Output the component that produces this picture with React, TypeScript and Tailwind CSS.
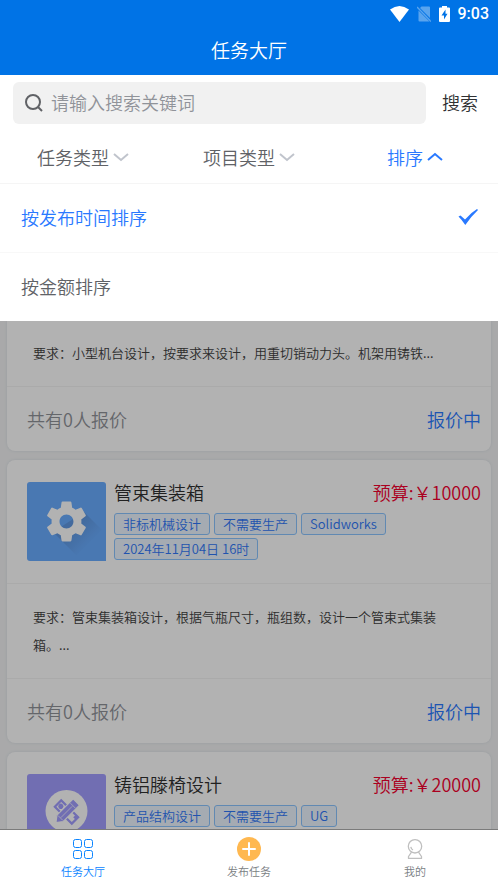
import { useState } from "react";

type Job = {
  title?: string;
  price?: string;
  tags?: string[];
  icon?: "gear" | "tools";
  text?: string;
};

const jobs: Job[] = [
  { text: "要求：小型机台设计，按要求来设计，用重切销动力头。机架用铸铁..." },
  {
    title: "管束集装箱",
    price: "10000",
    icon: "gear",
    tags: ["非标机械设计", "不需要生产", "Solidworks", "2024年11月04日 16时"],
    text: "要求：管束集装箱设计，根据气瓶尺寸，瓶组数，设计一个管束式集装箱。...",
  },
  {
    title: "铸铝滕椅设计",
    price: "20000",
    icon: "tools",
    tags: ["产品结构设计", "不需要生产", "UG"],
  },
];

function StatusBar() {
  return (
    <div className="flex h-7 items-center justify-end pr-[9px] text-white">
      <svg className="mr-2" width="19" height="16" viewBox="0 0 19 16" fill="currentColor">
        <path d="M0 3.6Q9.500-3.400 19 3.600L9.500 16Z" />
      </svg>
      <svg className="mr-2" width="14" height="16" viewBox="0 0 14 16" fill="currentColor" opacity="0.35">
        <path d="M4.500 0.500H12Q13 0.500 13 1.500V12L3 2Z" />
        <path d="M1.500 4.500L12.500 15.500H2.500Q1.500 15.500 1.500 14.500Z" />
        <path d="M0 1L14 15.500" stroke="currentColor" strokeWidth="1.400" />
      </svg>
      <svg className="mr-2" width="11" height="16" viewBox="0 0 11 16">
        <path d="M3 0H8V1.500H10Q11 1.500 11 2.500V15Q11 16 10 16H1Q0 16 0 15V2.500Q0 1.500 1 1.500H3Z" fill="currentColor" />
        <path d="M6.500 3.500L2.500 9.500H5V13.500L8.500 7.800H6.500Z" fill="#0073e6" />
      </svg>
      <span className="font-['Roboto',sans-serif] text-base font-medium leading-5">9:03</span>
    </div>
  );
}

function Chevron({ up = false }: { up?: boolean }) {
  return (
    <svg width="16" height="10" viewBox="0 0 16 10" fill="none" stroke="currentColor" strokeWidth="2">
      <path d={up ? "M1 8L8 2L15 8" : "M1 2L8 8L15 2"} />
    </svg>
  );
}

function GearTile() {
  return (
    <svg className="size-[79px] shrink-0" viewBox="0 0 79 79">
      <defs>
        <linearGradient id="gearShade" gradientUnits="userSpaceOnUse" x1="40" y1="40" x2="62" y2="62">
          <stop offset="0.3" stopColor="#6099e2" />
          <stop offset="1" stopColor="#69acff" />
        </linearGradient>
      </defs>
      <rect width="79" height="79" rx="3" fill="#69acff" />
      <path d="M57 30L79 52V79H55L26 50Z" fill="url(#gearShade)" />
      <g transform="translate(15.600 15.600) scale(1.990)">
        <path
          fill="#fff"
          d="M19.430 12.980c.040-.320.070-.640.070-.980s-.030-.660-.070-.980l2.110-1.650c.190-.150.240-.420.120-.640l-2-3.460c-.120-.220-.390-.300-.610-.220l-2.490 1c-.520-.400-1.080-.730-1.690-.980l-.380-2.650C14.460 2.180 14.250 2 14 2h-4c-.250 0-.460.180-.490.420l-.380 2.650c-.610.250-1.170.590-1.690.980l-2.490-1c-.230-.090-.490 0-.610.220l-2 3.460c-.130.220-.070.490.120.640l2.110 1.650c-.040.320-.070.650-.070.980s.030.660.070.980l-2.110 1.650c-.190.150-.240.420-.120.640l2 3.460c.120.220.390.300.610.220l2.490-1c.520.400 1.080.730 1.690.980l.380 2.650c.030.240.240.420.490.420h4c.250 0 .460-.180.490-.420l.380-2.650c.610-.250 1.170-.590 1.690-.980l2.490 1c.230.090.490 0 .610-.220l2-3.460c.120-.220.070-.490-.120-.640l-2.110-1.650zM12 15.500c-1.930 0-3.500-1.570-3.500-3.500s1.570-3.500 3.500-3.500 3.500 1.570 3.500 3.500-1.570 3.500-3.500 3.500z"
        />
      </g>
    </svg>
  );
}

function ToolsTile() {
  return (
    <svg className="size-[79px] shrink-0" viewBox="0 0 79 79">
      <rect width="79" height="79" rx="3" fill="#a29eff" />
      <circle cx="39.500" cy="37" r="21" fill="#fff" />
      <g transform="translate(39.500 38)" stroke="#a29eff" strokeWidth="2.200" fill="none">
        <g transform="rotate(45)">
          <rect x="-12" y="-4.500" width="24" height="9" />
          <circle cx="-8" cy="0" r="1.500" fill="#a29eff" />
          <path d="M10-4V-1" strokeWidth="3" />
        </g>
        <g transform="rotate(-45)">
          <path d="M-15 0L-9-4.500H14V4.500H-9Z" fill="#a29eff" stroke="#fff" strokeWidth="1.200" />
          <path d="M-8.500-3.500V3.500M9-3.500V3.500M-8 0H8" stroke="#fff" strokeWidth="0.700" />
        </g>
      </g>
    </svg>
  );
}

function JobCard({ job }: { job: Job }) {
  return (
    <article
      className={"bg-white shadow-[0_0_3px_#d8dde3] " + (job.title ? "rounded-lg" : "rounded-b-lg")}
    >
      {job.title && (
        <div className="flex gap-2 border-b border-[#f4f4f4] pt-[22px] pr-[10px] pb-[22px] pl-5">
          {job.icon === "gear" ? <GearTile /> : <ToolsTile />}
          <div className="min-w-0 flex-1">
            <div className="flex justify-between text-lg leading-5">
              <h2 className="text-[#303030]">{job.title}</h2>
              <span className="text-[#f5002f]">预算:￥{job.price}</span>
            </div>
            <div className="mt-[11px] flex flex-wrap gap-x-1 gap-y-[3px]">
              {job.tags?.map((tag) => (
                <span
                  key={tag}
                  className="h-[22px] rounded-[3px] border border-[#8cc5ff] bg-[#ecf5ff] px-2 text-[13px] leading-5 text-[#3078fa]"
                >
                  {tag}
                </span>
              ))}
            </div>
          </div>
        </div>
      )}
      {job.text && (
        <>
          <p
            className={
              "border-b border-[#f4f4f4] pr-8 pl-[26px] text-[13px] leading-7 text-[#404040] " +
              (job.title ? "py-[19px]" : "pt-[18px] pb-[19px]")
            }
          >
            {job.text}
          </p>
          <div className="flex h-16 items-center justify-between pr-[10px] pl-5 text-lg">
            <span className="text-[#909399]">共有0人报价</span>
            <a href="#quote" className="text-[#2979ff]">报价中</a>
          </div>
        </>
      )}
    </article>
  );
}

const sorts = ["按发布时间排序", "按金额排序"];

export default function App() {
  const [sort, setSort] = useState(0);
  return (
    <div className="flex h-screen flex-col overflow-hidden bg-white font-['Noto_Sans_CJK_SC',sans-serif] font-[350]">
      <header className="bg-[#0073e6]">
        <StatusBar />
        <h1 className="h-[47px] text-center text-[19px] leading-[43px] text-white">任务大厅</h1>
      </header>

      <form className="flex items-center gap-4 pt-[7px] pr-5 pl-[13px]" onSubmit={(e) => e.preventDefault()}>
        <label className="flex h-[42px] min-w-0 flex-1 items-center gap-2 rounded-md bg-[#f1f1f1] px-3">
          <svg width="18" height="18" viewBox="0 0 18 18" fill="none" stroke="#606266" strokeWidth="2">
            <circle cx="8" cy="8" r="7" />
            <path d="M13 13L17 17" />
          </svg>
          <input
            type="text"
            aria-label="搜索"
            placeholder="请输入搜索关键词"
            className="min-w-0 flex-1 bg-transparent pb-0.5 text-lg leading-7 text-[#303133] outline-none placeholder:text-[#909399]"
          />
        </label>
        <button type="submit" className="pb-0.5 text-lg text-[#303133]">搜索</button>
      </form>

      <nav className="grid h-[60px] shrink-0 grid-cols-3 border-b border-[#f5f5f5] pt-1.5 text-lg text-[#606266]">
        {["任务类型", "项目类型", "排序"].map((name, i) => (
          <button
            key={name}
            type="button"
            className={"flex items-center justify-center gap-1 " + (i === 2 ? "text-[#2979ff]" : "")}
          >
            {name}
            <span className={i === 2 ? "" : "text-[#c0c4cc]"}>
              <Chevron up={i === 2} />
            </span>
          </button>
        ))}
      </nav>

      <ul className="shrink-0 divide-y divide-[#f8f8f8] text-lg">
        {sorts.map((name, i) => (
          <li key={name}>
            <button
              type="button"
              onClick={() => setSort(i)}
              className={
                "flex h-[68px] w-full items-center justify-between pr-5 pb-0.5 pl-[21px] " +
                (i === sort ? "text-[#2979ff]" : "text-[#606266]")
              }
            >
              {name}
              {i === sort && (
                <svg width="20" height="16" viewBox="0 0 20 16" fill="currentColor">
                  <path d="M0.500 7.500L2.500 6.500L7 10.500Q13 3.500 19 0L20 1Q13 7.500 7.300 16Q4 11 0.500 7.500Z" />
                </svg>
              )}
            </button>
          </li>
        ))}
      </ul>

      <main className="relative min-h-0 flex-1 overflow-hidden bg-[#f2f3f4] px-[7px]">
        <div className="flex flex-col gap-[9px]">
          {jobs.map((job, i) => (
            <JobCard key={i} job={job} />
          ))}
        </div>
        <div className="absolute inset-0 bg-black/30" />
      </main>

      <footer className="grid h-14 shrink-0 grid-cols-3 border-t border-[#7b7b7b] text-[11px] leading-4 text-[#7a7e83]">
        <a href="#tasks" className="flex flex-col items-center gap-0.5 pt-[7px] text-[#0a84ff]">
          <svg width="24" height="24" viewBox="0 0 24 24" fill="none" stroke="currentColor" strokeWidth="1">
            <rect x="2.500" y="2.500" width="8" height="8" rx="2" />
            <rect x="13.500" y="2.500" width="8" height="8" rx="2" />
            <rect x="2.500" y="13.500" width="8" height="8" rx="2" />
            <rect x="13.500" y="13.500" width="8" height="8" rx="2" />
          </svg>
          任务大厅
        </a>
        <a href="#publish" className="flex flex-col items-center gap-0.5 pt-[7px]">
          <svg width="24" height="24" viewBox="0 0 24 24">
            <circle cx="12" cy="12" r="12" fill="#ffb850" />
            <path d="M6 12H18M12 6V18" stroke="#fff" strokeWidth="2" strokeLinecap="round" />
          </svg>
          发布任务
        </a>
        <a href="#mine" className="flex flex-col items-center gap-0.5 pt-[7px]">
          <svg width="24" height="24" viewBox="0 0 24 24" fill="none" stroke="#bfbfbf" strokeWidth="1.300" strokeLinejoin="round">
            <circle cx="12" cy="9.300" r="6.700" />
            <path d="M8.500 15.200L5.500 19.500V21.400H18.500V19.500L15.500 15.200" />
            <path d="M7.800 9.800Q8.200 12 10 13" />
          </svg>
          我的
        </a>
      </footer>
    </div>
  );
}
